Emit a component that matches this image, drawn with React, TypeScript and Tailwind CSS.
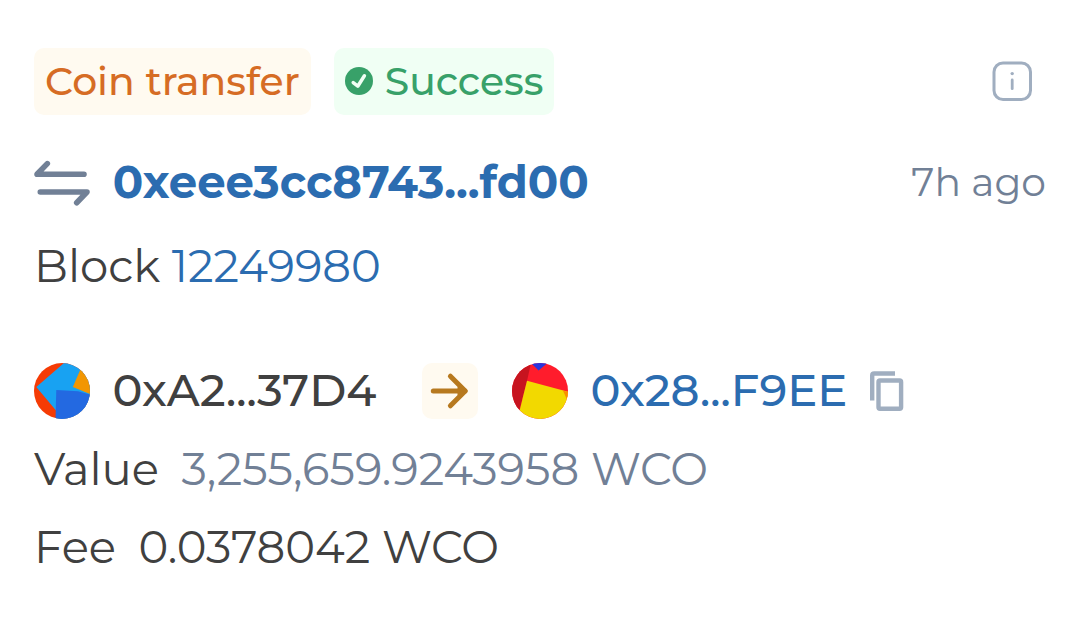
import type { ReactNode } from "react";

function Badge({ className, children }: { className: string; children: ReactNode }) {
  return (
    <span className={`flex h-[67px] items-center rounded-[10px] px-[11px] pb-px text-[39.3px] font-medium ${className}`}>
      {children}
    </span>
  );
}

function CheckIcon() {
  return (
    <svg className="mr-3 size-7" viewBox="0 0 28 28" fill="none">
      <circle cx="14" cy="14" r="14" fill="#38a169" />
      <path d="M8.2 15.6 L12.8 19.2 L19.4 8.8" stroke="#f0fff4" strokeWidth="3.5" strokeLinecap="round" strokeLinejoin="round" />
    </svg>
  );
}

function InfoIcon() {
  return (
    <svg className="size-10" viewBox="0 0 40 40" fill="none">
      <rect x="2" y="2" width="36.5" height="36.5" rx="9" stroke="#a0aec0" strokeWidth="3" />
      <circle cx="20.2" cy="12.6" r="1.7" fill="#a0aec0" />
      <path d="M20.2 19 V27.7" stroke="#a0aec0" strokeWidth="2.8" strokeLinecap="round" />
    </svg>
  );
}

function TransferIcon() {
  return (
    <svg className="h-12 w-14" viewBox="0 0 56 48" fill="none" stroke="#718096" strokeWidth="5.6" strokeLinecap="round" strokeLinejoin="round">
      <path d="M50 16.2 H3 L13.3 5.6" />
      <path d="M6.3 34 H53 L42.7 44.8" />
    </svg>
  );
}

function SenderAvatar() {
  return (
    <svg className="size-14" viewBox="0 0 56 56">
      <clipPath id="sender">
        <circle cx="28" cy="28" r="28" />
      </clipPath>
      <g clipPath="url(#sender)">
        <rect width="56" height="56" fill="#f53b05" />
        <path d="M2.3 24 L30 0 H56 V56 H22 V47.5 Z" fill="#18a2f2" />
        <path d="M46.2 7 L38.8 24 L56 31 V7 Z" fill="#f29602" />
        <path d="M22.3 27 L44 28.3 L56 31.4 V56 H21.5 Z" fill="#2369e1" />
      </g>
    </svg>
  );
}

function ReceiverAvatar() {
  return (
    <svg className="size-14" viewBox="0 0 56 56">
      <clipPath id="receiver">
        <circle cx="28" cy="28" r="28" />
      </clipPath>
      <g clipPath="url(#receiver)">
        <rect width="56" height="56" fill="#ff1c2c" />
        <path d="M0 0 H19 L15 18 L7.5 47 L0 56 Z" fill="#c7141f" />
        <path d="M15 17.7 L56 28.7 V56 H5.5 Z" fill="#f2d900" />
        <path d="M51 27.7 L57 29.2 V41 Z" fill="#f98e00" />
        <path d="M19 0 L26.6 7.6 L35.5 0 Z" fill="#2a35dc" />
      </g>
    </svg>
  );
}

function ArrowIcon() {
  return (
    <span className="flex size-14 items-center justify-center rounded-[10px] bg-[#fffaf0]">
      <svg className="size-14" viewBox="0 0 56 56" fill="none" stroke="#b7791f" strokeWidth="5" strokeLinecap="round" strokeLinejoin="round">
        <path d="M11.3 28 H43" />
        <path d="M28.4 13.2 L43.2 28 L28.4 42.8" />
        <path d="M36.5 24.5 L43 28 L36.5 31.5 Z" fill="#b7791f" strokeWidth="2" />
      </svg>
    </span>
  );
}

function CopyIcon() {
  return (
    <svg className="h-10 w-[34px]" viewBox="0 0 34 40" fill="none" stroke="#a0aec0" strokeWidth="4.4">
      <path d="M25 2.5 H4.2 Q2.2 2.5 2.2 4.5 V29.5" />
      <rect x="8.5" y="9.5" width="22.6" height="28.2" rx="1.5" />
    </svg>
  );
}

export default function App() {
  return (
    <main className="flex h-[617px] w-[1065px] flex-col overflow-hidden bg-white pt-12 pr-[19px] pl-[34px] font-['Montserrat','Lato',sans-serif] text-[44.97px] leading-[56px] whitespace-nowrap text-[#404040]">
      <div className="flex items-center">
        <Badge className="mr-[23px] bg-[#fffaf0] text-[#d66c24]">Coin transfer</Badge>
        <Badge className="bg-[#f0fff4] text-[#38a169]">
          <CheckIcon />
          Success
        </Badge>
        <span className="mr-[14px] ml-auto pb-px">
          <InfoIcon />
        </span>
      </div>
      <div className="mt-[39px] flex h-14 items-center">
        <TransferIcon />
        <a className="ml-[22.7px] font-bold text-[#2b6cb0]">0xeee3cc8743...fd00</a>
        <span className="ml-auto text-[39.3px] text-[#718096]">7h ago</span>
      </div>
      <p className="mt-7">
        Block <a className="text-[#2b6cb0]">12249980</a>
      </p>
      <div className="mt-[69px] flex h-14 items-center font-medium">
        <SenderAvatar />
        <span className="ml-[22.5px] w-[309.5px] pb-0.5">0xA2...37D4</span>
        <ArrowIcon />
        <span className="ml-[34px]">
          <ReceiverAvatar />
        </span>
        <a className="mr-[23px] ml-[22.5px] w-[256.5px] pb-0.5 text-[#2b6cb0]">0x28...F9EE</a>
        <CopyIcon />
      </div>
      <p className="mt-[22px] flex gap-[22.5px]">
        <span>Value</span>
        <span className="text-[#718096]">3,255,659.9243958 WCO</span>
      </p>
      <p className="mt-[22px] flex gap-[22.5px]">
        <span>Fee</span>
        <span>0.0378042 WCO</span>
      </p>
    </main>
  );
}
